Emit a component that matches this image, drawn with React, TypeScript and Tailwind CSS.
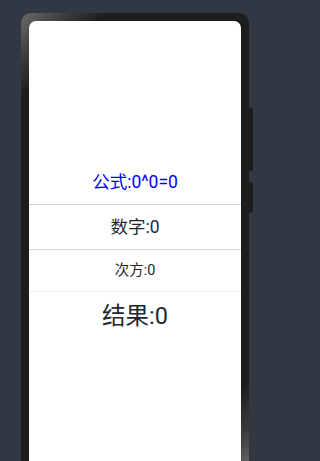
export default function App() {
  const font = { fontFamily: 'Roboto, "Noto Sans CJK SC", sans-serif' };

  return (
    <div className="h-[461px] w-full overflow-hidden bg-[#323843] pl-[21px] pt-[13px]" style={font}>
      <div className="relative flex w-[228px]">
        {/* phone body */}
        <div className="h-[480px] w-[228px] rounded-[10px] bg-[linear-gradient(135deg,#6a6a6a_0%,#3a3a3a_7%,#1d1d1d_12%,#1d1d1d_84%,#3c3c3c_91%,#8a8a8a_100%)] p-[8px]">
          <div className="h-full rounded-[7px] bg-white">
            <div className="flex flex-col pt-[140px]">
              <div className="flex h-[44px] items-center justify-center border-b border-[#cfcfcf] text-[17.5px] text-[#0000ff]">
                公式:0^0=0
              </div>
              <div className="flex h-[45px] items-center justify-center border-b border-[#d6d6d6] text-[17.5px] text-[#222831]">
                数字:0
              </div>
              <div className="flex h-[42px] items-center justify-center border-b border-[#f1f1f1] text-[14.5px] text-[#222831]">
                次方:0
              </div>
              <div className="flex h-[50px] items-center justify-center text-[23.5px] text-[#222831]">
                结果:0
              </div>
            </div>
          </div>
        </div>
        {/* side buttons */}
        <div className="absolute left-[228px] top-[95px] h-[63px] w-[4px] rounded-r-[2px] bg-[#1d1d1d]" />
        <div className="absolute left-[228px] top-[169px] h-[31px] w-[4px] rounded-r-[2px] bg-[#1d1d1d]" />
      </div>
    </div>
  );
}
